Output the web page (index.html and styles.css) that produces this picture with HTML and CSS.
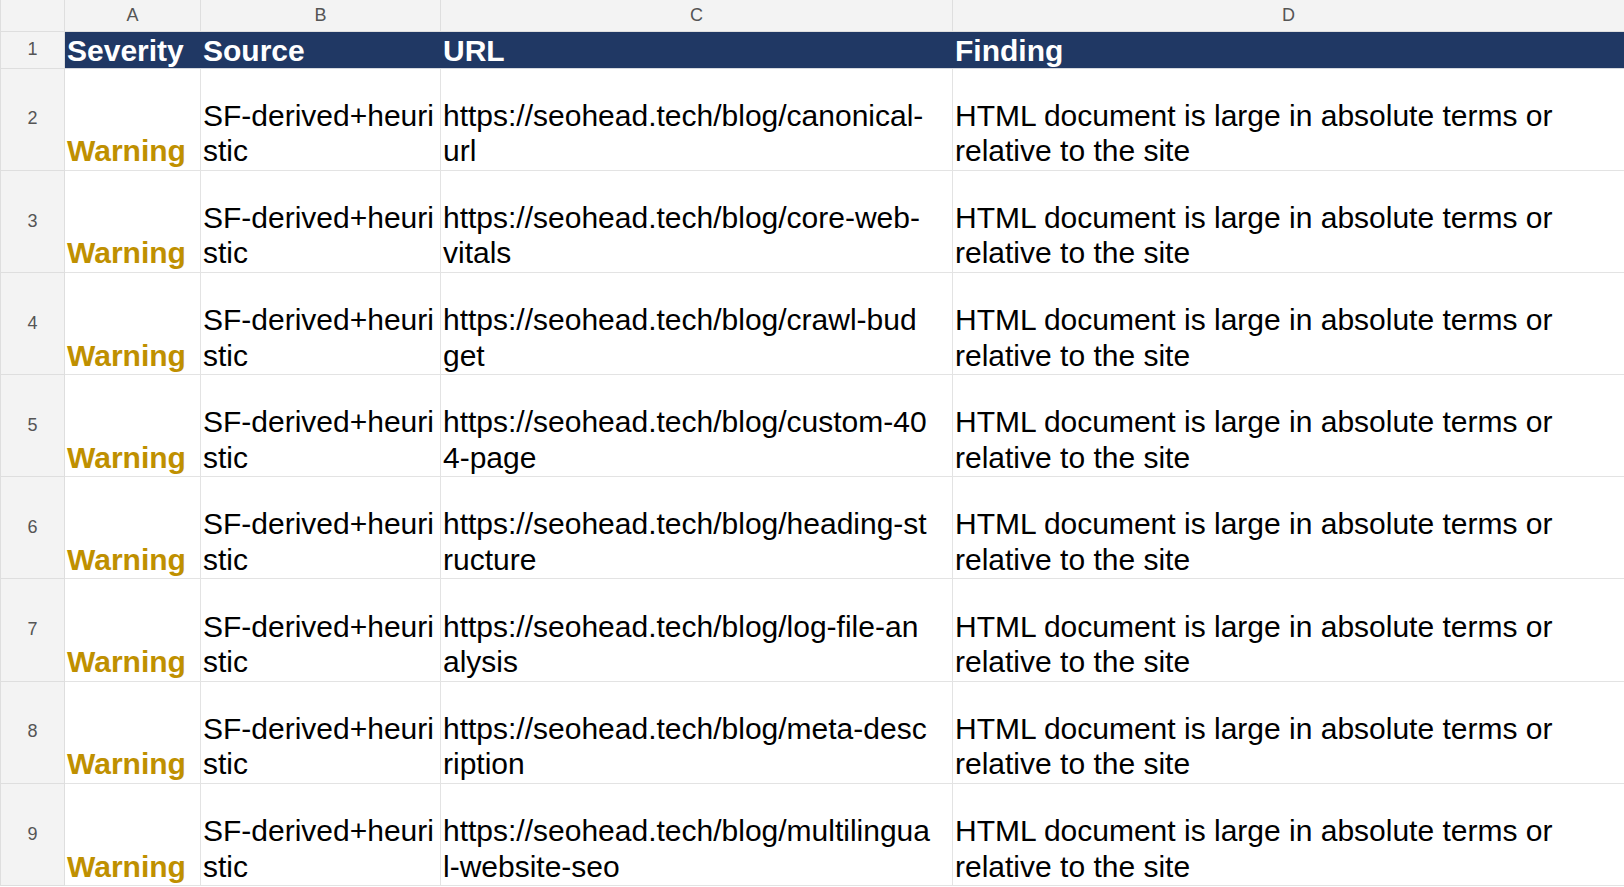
FILE: index.html
```html
<!DOCTYPE html>
<html lang="en">
<head>
    <meta charset="UTF-8">
    <meta name="viewport" content="width=device-width, initial-scale=1.0">
    <title>SEO Findings</title>
    <link rel="stylesheet" href="styles.css">
</head>
<body>

    <table class="sheet">
        <colgroup>
            <col class="col-num">
            <col class="col-a">
            <col class="col-b">
            <col class="col-c">
            <col class="col-d">
        </colgroup>
        <thead>
            <tr class="letters">
                <th class="corner"></th>
                <th>A</th>
                <th>B</th>
                <th>C</th>
                <th>D</th>
            </tr>
        </thead>
        <tbody>
            <tr class="head-row">
                <td class="num">1</td>
                <td class="head">Severity</td>
                <td class="head">Source</td>
                <td class="head">URL</td>
                <td class="head">Finding</td>
            </tr>
            <tr>
                <td class="num">2</td>
                <td class="severity">Warning</td>
                <td>SF-derived+heuristic</td>
                <td class="url">https://seohead.tech/blog/canonical-url</td>
                <td class="finding">HTML document is large in absolute terms or relative to the site</td>
            </tr>
            <tr>
                <td class="num">3</td>
                <td class="severity">Warning</td>
                <td>SF-derived+heuristic</td>
                <td class="url">https://seohead.tech/blog/core-web-vitals</td>
                <td class="finding">HTML document is large in absolute terms or relative to the site</td>
            </tr>
            <tr>
                <td class="num">4</td>
                <td class="severity">Warning</td>
                <td>SF-derived+heuristic</td>
                <td class="url">https://seohead.tech/blog/crawl-budget</td>
                <td class="finding">HTML document is large in absolute terms or relative to the site</td>
            </tr>
            <tr>
                <td class="num">5</td>
                <td class="severity">Warning</td>
                <td>SF-derived+heuristic</td>
                <td class="url">https://seohead.tech/blog/custom-404-page</td>
                <td class="finding">HTML document is large in absolute terms or relative to the site</td>
            </tr>
            <tr>
                <td class="num">6</td>
                <td class="severity">Warning</td>
                <td>SF-derived+heuristic</td>
                <td class="url">https://seohead.tech/blog/heading-structure</td>
                <td class="finding">HTML document is large in absolute terms or relative to the site</td>
            </tr>
            <tr>
                <td class="num">7</td>
                <td class="severity">Warning</td>
                <td>SF-derived+heuristic</td>
                <td class="url">https://seohead.tech/blog/log-file-analysis</td>
                <td class="finding">HTML document is large in absolute terms or relative to the site</td>
            </tr>
            <tr>
                <td class="num">8</td>
                <td class="severity">Warning</td>
                <td>SF-derived+heuristic</td>
                <td class="url">https://seohead.tech/blog/meta-description</td>
                <td class="finding">HTML document is large in absolute terms or relative to the site</td>
            </tr>
            <tr>
                <td class="num">9</td>
                <td class="severity">Warning</td>
                <td>SF-derived+heuristic</td>
                <td class="url">https://seohead.tech/blog/multilingual-website-seo</td>
                <td class="finding">HTML document is large in absolute terms or relative to the site</td>
            </tr>
        </tbody>
    </table>

</body>
</html>
```

FILE: styles.css
```css
body {
    margin: 0;
    background: white;
    font-family: "Liberation Sans", Arial, sans-serif;
    overflow: hidden;
}
.sheet {
    border-collapse: collapse;
    table-layout: fixed;
    width: 1624px;
}
.col-num { width: 64px; }
.col-a { width: 136px; }
.col-b { width: 240px; }
.col-c { width: 512px; }
.col-d { width: 672px; }

.letters th {
    height: 31px;
    padding: 0;
    background-color: #f3f3f3;
    border: 1px solid #dedede;
    border-top: none;
    color: #555;
    font-size: 18px;
    font-weight: normal;
    text-align: center;
    vertical-align: middle;
}

td {
    height: 100.2px;
    padding: 0 4px 1px 2px;
    border: 1px solid #e3e3e3;
    font-size: 30px;
    line-height: 35.5px;
    color: black;
    vertical-align: bottom;
    word-break: break-all;
}
td.num {
    padding: 0;
    background-color: #f3f3f3;
    border-color: #dedede;
    color: #555;
    font-size: 18px;
    text-align: center;
    vertical-align: middle;
}
.head-row td {
    height: 34px;
}
td.head {
    padding-bottom: 0;
    line-height: 34px;
    background-color: #203864;
    border-color: #203864;
    border-bottom-color: #d5d8de;
    color: white;
    font-weight: bold;
}
.severity {
    color: #bf9000;
    font-weight: bold;
}
td.url {
    padding-right: 20px;
}
td.finding {
    word-break: normal;
}
```
